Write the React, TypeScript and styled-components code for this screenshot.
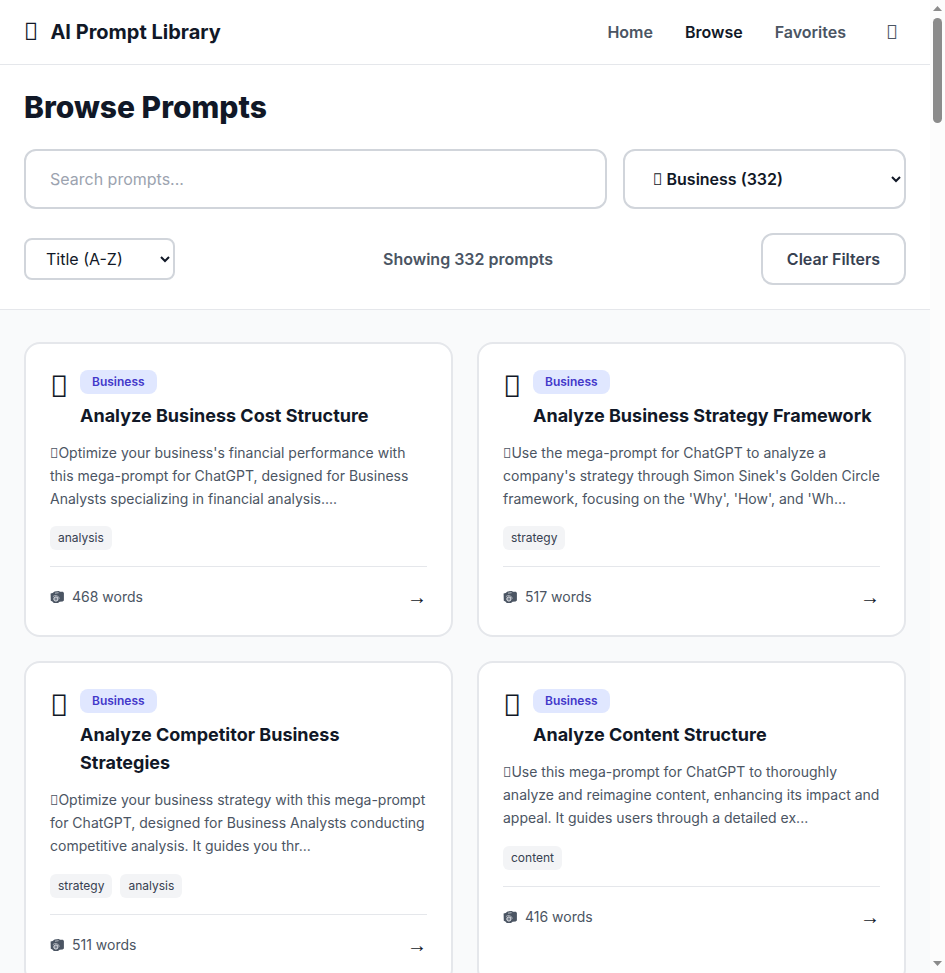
import React from "react";
import styled, { createGlobalStyle } from "styled-components";

const GlobalStyle = createGlobalStyle`
  *, *::before, *::after { box-sizing: border-box; }
  html, body { margin: 0; padding: 0; overflow: hidden; }
  body, button, input, select { font-family: Inter, "Liberation Sans", sans-serif; }
  body { color: #111827; background: #f9fafb; font-size: 16px; line-height: 24px; }
  h1, h2, p { margin: 0; }
`;

const Shell = styled.div`
  display: grid;
  grid-template-columns: minmax(0, 1fr) 15px;
  height: 100vh;
  overflow: hidden;
`;

const Page = styled.div`
  min-width: 0;
  height: 100vh;
  overflow: hidden;
  background: #f9fafb;
`;

const Glyph = styled.span`
  font-family: "Noto Sans", sans-serif;
  font-weight: 400;
  line-height: 1;
`;

const Header = styled.header`
  display: flex;
  align-items: center;
  justify-content: space-between;
  height: 65px;
  padding: 0 24px;
  background: #fff;
  border-bottom: 1px solid #e5e7eb;
`;

const Brand = styled.div`
  display: flex;
  align-items: center;
  gap: 12px;
  font-size: 20px;
  line-height: 28px;
  font-weight: 700;
`;

const BrandIcon = styled.span`
  font-size: 24px;
  line-height: 32px;
  font-weight: 400;
`;

const Nav = styled.nav`
  display: flex;
  align-items: center;
  gap: 32px;
`;

const NavLink = styled.a<{ $active?: boolean }>`
  font-weight: 600;
  color: ${(p) => (p.$active ? "#111827" : "#4b5563")};
`;

const ThemeButton = styled.button`
  padding: 8px;
  border: 0;
  background: none;
  font-size: 20px;
  line-height: 28px;
  color: #4b5563;
`;

const Filters = styled.section`
  padding: 24px;
  background: #fff;
  border-bottom: 1px solid #e5e7eb;
`;

const Heading = styled.h1`
  margin-bottom: 24px;
  font-size: 30px;
  line-height: 36px;
  font-weight: 800;
`;

const SearchRow = styled.div`
  display: grid;
  grid-template-columns: minmax(0, 1fr) 283px;
  gap: 16px;
  margin-bottom: 24px;
`;

const SearchInput = styled.input`
  height: 60px;
  padding: 0 24px;
  border: 2px solid #d1d5db;
  border-radius: 12px;
  background: #fff;
  font-size: 16px;
  &::placeholder { color: #9ca3af; }
`;

const Select = styled.select<{ $large?: boolean }>`
  width: ${(p) => (p.$large ? "100%" : "151px")};
  height: ${(p) => (p.$large ? "60px" : "42px")};
  padding: ${(p) => (p.$large ? "0 24px 0 37.5px" : "0 16px")};
  border: 2px solid #d1d5db;
  border-radius: ${(p) => (p.$large ? "12px" : "8px")};
  background: #fff;
  color: #111827;
  font-size: 16px;
  font-weight: ${(p) => (p.$large ? 600 : 400)};
`;

const CategoryField = styled.div`
  position: relative;
`;

const CategoryIcon = styled.span`
  position: absolute;
  left: 30px;
  top: 18px;
  font-size: 16px;
  line-height: 24px;
  pointer-events: none;
`;

const SortRow = styled.div`
  display: flex;
  align-items: center;
  justify-content: space-between;
  height: 52px;
`;

const Count = styled.span`
  font-weight: 600;
  color: #4b5563;
`;

const ClearButton = styled.button`
  width: 145px;
  height: 52px;
  padding: 0;
  border: 2px solid #d1d5db;
  border-radius: 12px;
  background: #fff;
  color: #374151;
  font-size: 16px;
  font-weight: 600;
`;

const CardGrid = styled.main`
  display: grid;
  grid-template-columns: repeat(2, minmax(0, 1fr));
  gap: 24px;
  padding: 32px 24px;
`;

const Card = styled.article`
  padding: 24px;
  background: #fff;
  border: 2px solid #e5e7eb;
  border-radius: 16px;
`;

const CardTop = styled.div`
  display: flex;
  align-items: flex-start;
  gap: 12px;
  margin-bottom: 11px;
`;

const CardIcon = styled.span`
  flex: none;
  font-size: 30px;
  line-height: 36px;
`;

const CardHeading = styled.div`
  flex: 1;
  min-width: 0;
  padding-top: 2px;
`;

const Badge = styled.span`
  display: block;
  width: fit-content;
  margin-bottom: 8px;
  padding: 4px 12px;
  border-radius: 8px;
  background: #e0e7ff;
  color: #4338ca;
  font-size: 12px;
  line-height: 16px;
  font-weight: 600;
`;

const CardTitle = styled.h2`
  font-size: 18px;
  line-height: 28px;
  font-weight: 700;
`;

const Description = styled.p`
  margin-bottom: 16px;
  color: #4b5563;
  font-size: 14px;
  line-height: 1.65;
`;

const Tags = styled.div`
  display: flex;
  gap: 8px;
  margin-bottom: 16px;
`;

const Tag = styled.span`
  padding: 4px 8px;
  border-radius: 6px;
  background: #f3f4f6;
  color: #374151;
  font-size: 12px;
  line-height: 16px;
`;

const CardFooter = styled.footer`
  display: flex;
  align-items: center;
  justify-content: space-between;
  padding-top: 16px;
  border-top: 1px solid #e5e7eb;
`;

const Words = styled.span`
  display: flex;
  align-items: center;
  gap: 8px;
  color: #4b5563;
  font-size: 14px;
  line-height: 20px;
`;

const CameraSvg = styled.svg`
  flex: none;
  width: 14px;
  height: 14px;
`;

const Arrow = styled.span`
  font-family: "Liberation Sans", sans-serif;
  font-size: 20px;
  line-height: 28px;
`;

const ScrollTrack = styled.div`
  display: flex;
  flex-direction: column;
  align-items: center;
  height: 100vh;
  padding: 6px 0 7px;
  background: #fcfcfc;
`;

const ScrollArrow = styled.svg`
  display: block;
  flex: none;
  width: 9px;
  height: 5px;
  fill: #8b8b8b;
`;

const ScrollThumb = styled.div`
  width: 9px;
  height: 105px;
  margin: 7px 0 auto;
  border-radius: 5px;
  background: #8b8b8b;
`;

interface Prompt {
  title: string;
  text: string;
  tags: string[];
  words: number;
}

const BOX = "\uE0FF";

const prompts: Prompt[] = [
  {
    title: "Analyze Business Cost Structure",
    text: "Optimize your business's financial performance with this mega-prompt for ChatGPT, designed for Business Analysts specializing in financial analysis....",
    tags: ["analysis"],
    words: 468,
  },
  {
    title: "Analyze Business Strategy Framework",
    text: "Use the mega-prompt for ChatGPT to analyze a company's strategy through Simon Sinek's Golden Circle framework, focusing on the 'Why', 'How', and 'Wh...",
    tags: ["strategy"],
    words: 517,
  },
  {
    title: "Analyze Competitor Business Strategies",
    text: "Optimize your business strategy with this mega-prompt for ChatGPT, designed for Business Analysts conducting competitive analysis. It guides you thr...",
    tags: ["strategy", "analysis"],
    words: 511,
  },
  {
    title: "Analyze Content Structure",
    text: "Use this mega-prompt for ChatGPT to thoroughly analyze and reimagine content, enhancing its impact and appeal. It guides users through a detailed ex...",
    tags: ["content"],
    words: 416,
  },
];

function CameraIcon() {
  return (
    <CameraSvg viewBox="0 0 14 14" aria-hidden="true">
      <path
        d="M.6 3.4 2.6 3 4.6 1.4 8.8 1 10 1.8 13 1.8 13.9 3V10.6L12.6 11.4 9.6 11.8 8 13H3.8L2.4 11.4.8 10.8Z"
        fill="#4b5563"
      />
      <path d="M5 3.2 8.6 2.7" stroke="#c4c8ce" strokeWidth="0.9" />
      <path d="M2.9 6.6A3.9 3.9 0 0 1 9.4 8.6" fill="none" stroke="#c4c8ce" strokeWidth="0.8" />
      <circle cx="5.9" cy="9" r="2.1" fill="#7b8390" stroke="#e5e7eb" strokeWidth="1" />
    </CameraSvg>
  );
}

function PromptCard({ title, text, tags, words }: Prompt) {
  return (
    <Card>
      <CardTop>
        <CardIcon><Glyph>{BOX}</Glyph></CardIcon>
        <CardHeading>
          <Badge>Business</Badge>
          <CardTitle>{title}</CardTitle>
        </CardHeading>
      </CardTop>
      <Description><Glyph>{BOX}</Glyph>{text}</Description>
      <Tags>
        {tags.map((tag) => (
          <Tag key={tag}>{tag}</Tag>
        ))}
      </Tags>
      <CardFooter>
        <Words>
          <CameraIcon />
          <span>{words} words</span>
        </Words>
        <Arrow>→</Arrow>
      </CardFooter>
    </Card>
  );
}

export default function App() {
  return (
    <>
      <GlobalStyle />
      <Shell>
        <Page>
          <Header>
            <Brand>
              <BrandIcon><Glyph>{BOX}</Glyph></BrandIcon>
              <span>AI Prompt Library</span>
            </Brand>
            <Nav>
              <NavLink>Home</NavLink>
              <NavLink $active>Browse</NavLink>
              <NavLink>Favorites</NavLink>
              <ThemeButton><Glyph>{BOX}</Glyph></ThemeButton>
            </Nav>
          </Header>
          <Filters>
            <Heading>Browse Prompts</Heading>
            <SearchRow>
              <SearchInput placeholder="Search prompts..." />
              <CategoryField>
                <Select $large defaultValue="business">
                  <option value="business">Business (332)</option>
                </Select>
                <CategoryIcon><Glyph>{BOX}</Glyph></CategoryIcon>
              </CategoryField>
            </SearchRow>
            <SortRow>
              <Select defaultValue="title">
                <option value="title">Title (A-Z)</option>
              </Select>
              <Count>Showing 332 prompts</Count>
              <ClearButton>Clear Filters</ClearButton>
            </SortRow>
          </Filters>
          <CardGrid>
            {prompts.map((prompt) => (
              <PromptCard key={prompt.title} {...prompt} />
            ))}
          </CardGrid>
        </Page>
        <ScrollTrack>
          <ScrollArrow viewBox="0 0 9 5">
            <path d="M4.5 0 9 5H0Z" />
          </ScrollArrow>
          <ScrollThumb />
          <ScrollArrow viewBox="0 0 9 5">
            <path d="M0 0h9L4.5 5Z" />
          </ScrollArrow>
        </ScrollTrack>
      </Shell>
    </>
  );
}
